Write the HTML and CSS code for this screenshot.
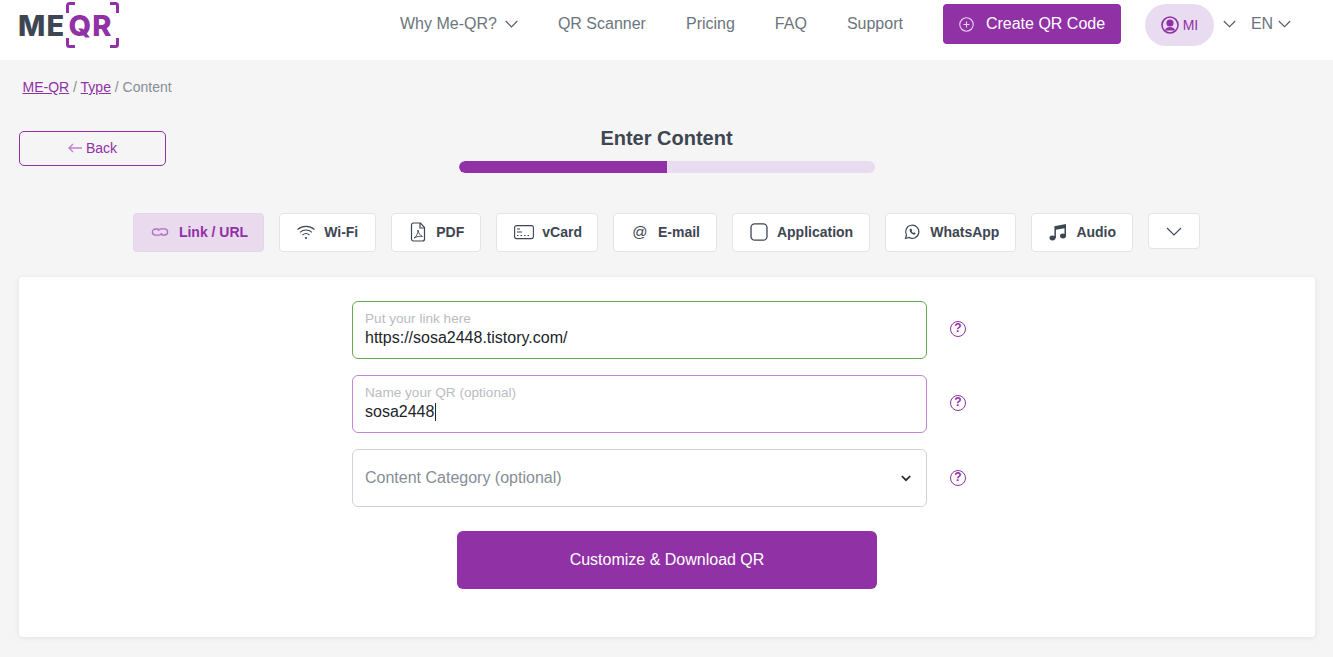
FILE: index.html
```html
<!DOCTYPE html>
<html lang="en">
<head>
<meta charset="utf-8">
<title>ME-QR</title>
<link rel="stylesheet" href="styles.css">
</head>
<body>
<header class="header">
  <a class="logo">
    <span class="logo-me">ME</span><span class="logo-qr">QR</span>
    <svg class="logo-frame" width="53" height="46" viewBox="0 0 53 46" fill="none" stroke="#9031a6" stroke-width="3" stroke-linejoin="round"><path d="M1.500 11V3.500a2 2 0 0 1 2-2H9M44 1.500h5.500a2 2 0 0 1 2 2V11M1.500 36v6.500a2 2 0 0 0 2 2H9M44 44.500h5.500a2 2 0 0 0 2-2V36"/></svg>
  </a>
  <nav class="nav">
    <a class="nav-item nav-why">Why Me-QR?<svg class="chev-nav" width="13" height="8" viewBox="0 0 13 8" fill="none" stroke="#555c66" stroke-width="1.2"><path d="M.7 1l5.800 5.800L12.300 1"/></svg></a>
    <a class="nav-item">QR Scanner</a>
    <a class="nav-item">Pricing</a>
    <a class="nav-item">FAQ</a>
    <a class="nav-item">Support</a>
  </nav>
  <button class="create-btn">
    <svg width="15" height="15" viewBox="0 0 15 15" fill="none" stroke="#e8d4ee" stroke-width="1.1"><circle cx="7.5" cy="7.5" r="6.7"/><path d="M7.5 4.5v6M4.5 7.5h6"/></svg>
    <span>Create QR Code</span>
  </button>
  <div class="user-pill">
    <svg width="18" height="18" viewBox="0 0 18 18" fill="none" stroke="#9031a6" stroke-width="1.6"><circle cx="9" cy="9" r="8"/><circle cx="9" cy="7" r="2.8" fill="#9031a6"/><path d="M3.8 14.5c1-2.6 3-3.5 5.2-3.5s4.200.9 5.200 3.500" fill="#9031a6" stroke="none"/></svg>
    <span>MI</span>
  </div>
  <svg class="chev-user" width="13" height="8" viewBox="0 0 13 8" fill="none" stroke="#555c66" stroke-width="1.1"><path d="M.8 1l5.700 5.700L12.200 1"/></svg>
  <span class="lang">EN</span>
  <svg class="chev-lang" width="13" height="8" viewBox="0 0 13 8" fill="none" stroke="#555c66" stroke-width="1.1"><path d="M.8 1l5.700 5.700L12.200 1"/></svg>
</header>

<main class="main">
  <div class="crumbs"><a class="crumb-link">ME-QR</a> / <a class="crumb-link">Type</a> / Content</div>

  <section class="progress-head">
    <a class="back-btn"><svg width="14" height="10" viewBox="0 0 14 10" fill="none" stroke="#c083d0" stroke-width="1.300"><path d="M14 5H1M5 1L1 5l4 4"/></svg><span>Back</span></a>
    <h1 class="title">Enter Content</h1>
    <div class="bar"><div class="bar-fill"></div></div>
  </section>

  <div class="tabs">
    <a class="tab tab-active">
      <svg class="tab-icon" width="18" height="18" viewBox="0 0 18 18" fill="none" stroke="#b26cc4" stroke-width="1.300"><path d="M7.500 6H4.500a3 3 0 0 0 0 6.200h3.500a3 3 0 0 0 2.800-2.200"/><path d="M10.500 12h3a3 3 0 0 0 0-6.200H10a3 3 0 0 0-2.800 2.200"/></svg>
      <span>Link / URL</span>
    </a>
    <a class="tab tab-plus">
      <svg class="tab-icon" width="18" height="18" viewBox="0 0 18 18" fill="none" stroke="#3d4652" stroke-width="1.100"><path d="M.5 6.500c5-4.200 12-4.200 17 0M3 9.300c3.500-3 8.500-3 12 0M5.500 12c2-1.700 5-1.700 7 0"/><circle cx="9" cy="15" r="1.100" fill="#3d4652" stroke="none"/></svg>
      <span>Wi-Fi</span>
    </a>
    <a class="tab">
      <svg class="tab-icon" width="18" height="20" viewBox="0 0 18 20" fill="none" stroke="#3d4652" stroke-width="1.200"><path d="M2.500 3a2 2 0 0 1 2-2h7l4 4.500V17a2 2 0 0 1-2 2h-9a2 2 0 0 1-2-2z"/><path d="M11 1v5h4.500"/><path d="M5 16c2.500-1.500 4-4.500 4-8 .5 3 2 5.500 4.500 6.500-3-.5-6 0-8.500 1.500z" stroke-width=".9"/></svg>
      <span>PDF</span>
    </a>
    <a class="tab tab-vcard">
      <svg class="tab-icon" width="20" height="16" viewBox="0 0 20 16" fill="none" stroke="#3d4652" stroke-width="1.100"><rect x=".6" y="1.600" width="18.800" height="13" rx="2"/><path d="M3 5h3M3 8h5M3 11.500h1.500M6.500 11.500h1.500M10 11.500h1.500M13.500 11.500h1.500" stroke-width="1.200"/></svg>
      <span>vCard</span>
    </a>
    <a class="tab">
      <span class="tab-icon at-icon">@</span>
      <span>E-mail</span>
    </a>
    <a class="tab">
      <svg class="tab-icon" width="18" height="18" viewBox="0 0 18 18" fill="none" stroke="#3d4652" stroke-width="1.300"><rect x="1" y=".8" width="16" height="16.400" rx="3.800"/></svg>
      <span>Application</span>
    </a>
    <a class="tab">
      <svg class="tab-icon" width="18" height="18" viewBox="0 0 18 18" fill="none" stroke="#3d4652" stroke-width="1.200"><path d="M2.500 15.500l1-3.500a6.600 6.600 0 1 1 2.500 2.500z"/><path d="M6.700 6c-.6 2.800 2.500 6 5.300 5.500l.7-1.300-1.600-.9-.7.600c-.9-.3-1.500-1-1.800-1.900l.6-.7L8.200 5.700z" fill="#3d4652" stroke="none"/></svg>
      <span>WhatsApp</span>
    </a>
    <a class="tab">
      <svg class="tab-icon" width="18" height="18" viewBox="0 0 18 18" fill="#3d4652"><ellipse cx="3.500" cy="15" rx="3" ry="2.400"/><ellipse cx="14" cy="13" rx="3" ry="2.400"/><path d="M5.400 15V3.200L17 1v12h-1.500V5.200L6.900 6.800V15z"/></svg>
      <span>Audio</span>
    </a>
    <button class="tab-more"><svg width="16" height="9" viewBox="0 0 16 9" fill="none" stroke="#3d4652" stroke-width="1.100"><path d="M1 1l7 7 7-7"/></svg></button>
  </div>

  <section class="card">
    <div class="row">
      <div class="field field-valid">
        <span class="field-label">Put your link here</span>
        <span class="field-value">https://sosa2448.tistory.com/</span>
      </div>
      <span class="help help-up">?</span>
    </div>
    <div class="row">
      <div class="field field-focus">
        <span class="field-label">Name your QR (optional)</span>
        <span class="field-value">sosa2448<i class="caret"></i></span>
      </div>
      <span class="help help-up">?</span>
    </div>
    <div class="row">
      <div class="field field-select">
        <span class="select-text">Content Category (optional)</span>
        <svg width="10" height="7" viewBox="0 0 10 7" fill="none" stroke="#212529" stroke-width="1.700"><path d="M.8 1l4.200 4.200L9.200 1"/></svg>
      </div>
      <span class="help">?</span>
    </div>
    <button class="submit">Customize &amp; Download QR</button>
  </section>
</main>
</body>
</html>
```
FILE: styles.css
```css
* { box-sizing: border-box; }
html, body { margin: 0; height: 100%; overflow: hidden; }
body {
  background: #f5f5f5;
  font-family: "Liberation Sans", Arial, sans-serif;
  color: #3d4652;
}
a { text-decoration: none; color: inherit; }
button { font-family: inherit; cursor: pointer; }

.header {
  height: 60px;
  background: #fff;
  display: flex;
  align-items: center;
  padding-left: 18px;
}
.logo {
  position: relative;
  display: flex;
  align-items: center;
  width: 102px;
  height: 50px;
  margin-bottom: 10px;
  font-family: Inter, "Liberation Sans", sans-serif;
  font-weight: 800;
  font-size: 29px;
  letter-spacing: 1.2px;
  line-height: 1;
}
.logo-me { color: #3d4652; margin-right: 3px; }
.logo-qr { color: #9031a6; }
.logo-frame { position: absolute; left: 48px; top: 2px; }

.nav {
  display: flex;
  align-items: center;
  gap: 40px;
  margin-left: 280px;
  margin-top: -12px;
  font-size: 16px;
  color: #6c757d;
}
.nav-item { white-space: nowrap; display: flex; align-items: center; }
.chev-nav { margin-left: 8px; }

.create-btn {
  margin-left: 40px;
  width: 178px;
  height: 40px;
  margin-top: -12px;
  background: #9031a6;
  border: 0;
  border-radius: 4px;
  color: #fff;
  font-size: 16px;
  display: flex;
  align-items: center;
  padding: 0 0 0 16px;
  gap: 12px;
}
.user-pill {
  margin-left: 24px;
  margin-top: -10px;
  width: 69px;
  height: 42px;
  border-radius: 21px;
  background: #eadcf0;
  color: #9031a6;
  font-size: 14px;
  display: flex;
  align-items: center;
  justify-content: center;
  gap: 4px;
}
.chev-user { margin-left: 9px; margin-top: -12px; }
.lang { margin-left: 15px; font-size: 16px; color: #6c757d; margin-top: -12px; }
.chev-lang { margin-left: 5px; margin-top: -12px; }

.main { padding: 0 18px 20px 19px; }
.crumbs {
  padding: 19px 0 0 3.5px;
  height: 71px;
  font-size: 14px;
  line-height: 16px;
  color: #868e96;
}
.crumb-link { color: #9031a6; text-decoration: underline; }

.progress-head {
  position: relative;
  height: 82px;
  display: flex;
  flex-direction: column;
  align-items: center;
  padding-right: 1px;
}
.back-btn {
  position: absolute;
  left: 0;
  top: 0;
  width: 147px;
  height: 35px;
  padding-bottom: 2px;
  border: 1px solid #9031a6;
  border-radius: 5px;
  color: #9031a6;
  font-size: 14px;
  display: flex;
  align-items: center;
  justify-content: center;
  gap: 4px;
}
.title {
  margin: -5px 0 0;
  font-size: 20px;
  line-height: 24px;
  font-weight: 700;
  color: #3d4652;
}
.bar {
  width: 416px;
  height: 12px;
  margin-top: 11px;
  border-radius: 6px;
  background: #eadcf0;
  overflow: hidden;
}
.bar-fill { width: 50%; height: 100%; background: #9031a6; border-radius: 6px 0 0 6px; }

.tabs {
  display: flex;
  justify-content: center;
  align-items: flex-start;
  gap: 15px;
  height: 64px;
  padding-right: 1px;
}
.tab {
  height: 39px;
  padding: 0 16px 2px 17px;
  display: flex;
  align-items: center;
  gap: 9px;
  background: #fff;
  border: 1px solid #e4e4e4;
  border-radius: 4px;
  font-size: 14px;
  font-weight: 700;
  color: #3d4652;
  white-space: nowrap;
}
.tab-plus { padding-right: 17px; }
.tab-vcard { gap: 8px; padding-right: 15px; }
.tab-active {
  background: #e9daee;
  border-color: #e4d8e8;
  color: #9031a6;
  gap: 10px;
  padding-right: 15px;
}
.tab-icon { flex: none; }
.at-icon {
  width: 18px;
  text-align: center;
  font-weight: 400;
  font-size: 15px;
}
.tab-more {
  width: 52px;
  height: 36px;
  background: #fff;
  border: 1px solid #e4e4e4;
  border-radius: 4px;
  padding: 0;
  display: flex;
  align-items: center;
  justify-content: center;
}

.card {
  height: 360px;
  background: #fff;
  border-radius: 4px;
  box-shadow: 0 1px 6px rgba(0, 0, 0, .08);
  padding: 24px 0 0 333px;
  display: flex;
  flex-direction: column;
  gap: 16px;
}
.row { display: flex; align-items: center; gap: 23px; }
.field {
  width: 575px;
  height: 58px;
  border: 1px solid #ced4da;
  border-radius: 6px;
  padding: 9px 12px 0;
  display: flex;
  flex-direction: column;
  background: #fff;
}
.field-valid { border-color: #6aa84f; }
.field-focus { border-color: #c287d6; }
.field-label { font-size: 13.6px; line-height: 16px; color: #b9bdc2; }
.field-value { font-size: 16px; line-height: 20px; margin-top: 1px; color: #212529; display: flex; align-items: center; }
.caret { width: 1px; height: 18px; background: #212529; margin-left: 1px; }
.field-select {
  flex-direction: row;
  align-items: center;
  justify-content: space-between;
  padding: 0 15px 0 12px;
}
.select-text { font-size: 16px; color: #868e96; }
.help {
  width: 16px;
  height: 16px;
  flex: none;
  border: 1.500px solid #9031a6;
  border-radius: 50%;
  color: #9031a6;
  font-size: 12px;
  font-weight: 700;
  line-height: 13px;
  text-align: center;
}
.help-up { margin-top: -2px; }
.submit {
  width: 420px;
  height: 58px;
  margin: 8px 0 0 105px;
  background: #9031a6;
  border: 0;
  border-radius: 6px;
  color: #fff;
  font-size: 16px;
}
```
